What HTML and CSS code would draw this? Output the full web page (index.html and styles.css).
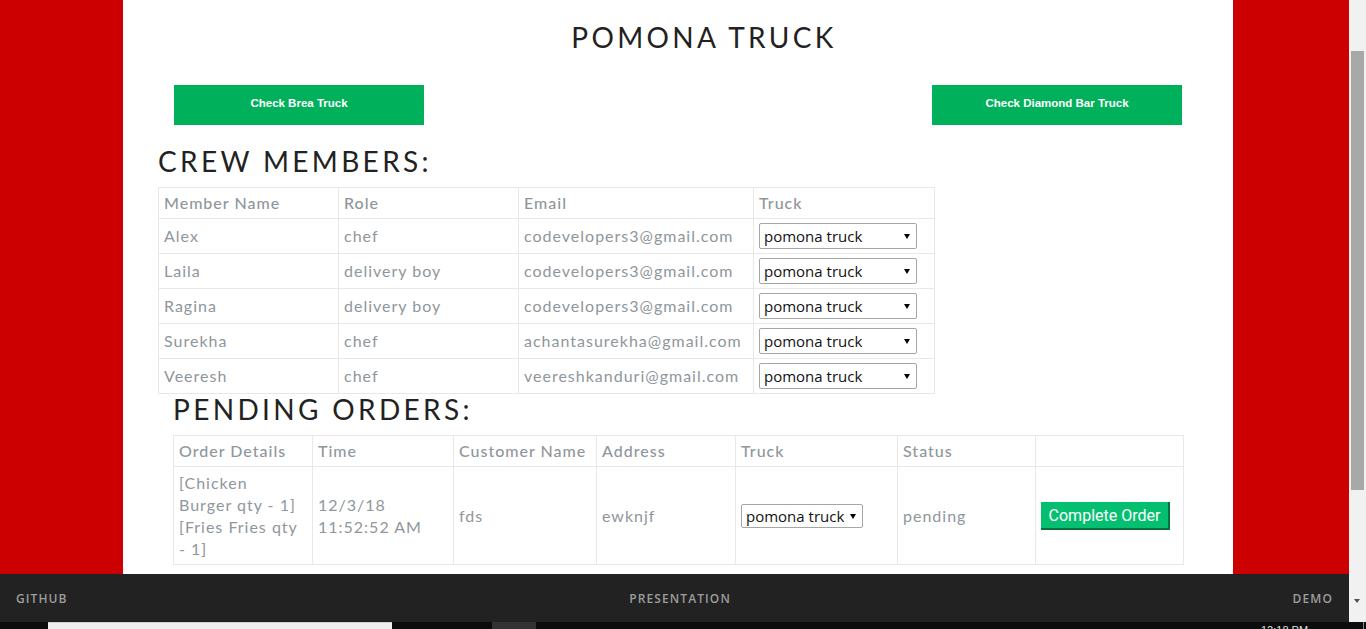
FILE: index.html
```html
<!DOCTYPE html>
<html lang="en">
<head>
<meta charset="utf-8">
<title>Pomona Truck</title>
<link rel="stylesheet" href="styles.css">
</head>
<body>
<div class="screen">
  <div class="viewport">
    <div class="page">
      <main class="container">
        <h1 class="title">POMONA TRUCK</h1>
        <div class="truck-links">
          <button class="truck-btn">Check Brea Truck</button>
          <button class="truck-btn">Check Diamond Bar Truck</button>
        </div>
        <section class="crew">
          <h2 class="section-title">CREW MEMBERS:</h2>
          <table class="data crew-table">
            <colgroup><col class="c180"><col class="c180"><col class="c235"><col class="c181"></colgroup>
            <thead><tr><th>Member Name</th><th>Role</th><th>Email</th><th>Truck</th></tr></thead>
            <tbody>
              <tr><td>Alex</td><td>chef</td><td>codevelopers3@gmail.com</td><td><span class="select-wrap"><span class="select">pomona truck</span></span></td></tr>
              <tr><td>Laila</td><td>delivery boy</td><td>codevelopers3@gmail.com</td><td><span class="select-wrap"><span class="select">pomona truck</span></span></td></tr>
              <tr><td>Ragina</td><td>delivery boy</td><td>codevelopers3@gmail.com</td><td><span class="select-wrap"><span class="select">pomona truck</span></span></td></tr>
              <tr><td>Surekha</td><td>chef</td><td>achantasurekha@gmail.com</td><td><span class="select-wrap"><span class="select">pomona truck</span></span></td></tr>
              <tr><td>Veeresh</td><td>chef</td><td>veereshkanduri@gmail.com</td><td><span class="select-wrap"><span class="select">pomona truck</span></span></td></tr>
            </tbody>
          </table>
        </section>
        <section class="orders">
          <h2 class="section-title">PENDING ORDERS:</h2>
          <table class="data orders-table">
            <colgroup><col class="c139"><col class="c141"><col class="c143"><col class="c139"><col class="c162"><col class="c138"><col class="c148"></colgroup>
            <thead><tr><th>Order Details</th><th>Time</th><th>Customer Name</th><th>Address</th><th>Truck</th><th>Status</th><th></th></tr></thead>
            <tbody>
              <tr>
                <td class="details">[Chicken Burger qty - 1] [Fries Fries qty - 1]</td>
                <td>12/3/18<br>11:52:52 AM</td>
                <td>fds</td>
                <td>ewknjf</td>
                <td><span class="select-wrap small"><span class="select">pomona truck</span></span></td>
                <td>pending</td>
                <td><button class="complete-btn">Complete Order</button></td>
              </tr>
            </tbody>
          </table>
        </section>
      </main>
      <footer class="footer">
        <a class="foot-link">GITHUB</a>
        <a class="foot-link">PRESENTATION</a>
        <a class="foot-link">DEMO</a>
      </footer>
    </div>
    <div class="scrollbar"><div class="thumb"></div><span class="arrow-down"></span></div>
  </div>
  <div class="taskbar">
    <span class="tb-search"></span>
    <span class="tb-app"></span>
    <span class="tb-clock">12:18 PM</span>
    <span class="tb-edge"></span>
  </div>
</div>
</body>
</html>
```
FILE: styles.css
```css
html, body {
  margin: 0;
  padding: 0;
  overflow: hidden;
}
.screen {
  width: 1366px;
  height: 629px;
  display: flex;
  flex-direction: column;
}
.viewport {
  display: flex;
  height: 622px;
}
.page {
  flex: 1;
  background: #cc0000;
  display: flex;
  flex-direction: column;
}
.container {
  margin-left: 123px;
  width: 1110px;
  height: 574px;
  background: #ffffff;
  box-sizing: border-box;
  padding-top: 23px;
  font-family: "Lato", "Open Sans", sans-serif;
}
.title {
  margin: 0;
  padding-left: 52px;
  text-align: center;
  font-weight: 400;
  font-size: 28px;
  line-height: 28px;
  letter-spacing: 3.35px;
  color: #222;
}
.truck-links {
  display: flex;
  justify-content: space-between;
  margin: 34px 51px 0;
}
.truck-btn {
  width: 250px;
  height: 40px;
  border: none;
  background: #00b05a;
  color: #fff;
  font-family: "Liberation Sans", Arial, sans-serif;
  font-weight: 700;
  font-size: 11.5px;
  padding: 0 0 4px;
}
.section-title {
  margin: 0 0 12px;
  font-weight: 400;
  font-size: 28px;
  line-height: 28px;
  letter-spacing: 3.35px;
  color: #222;
}
.crew {
  padding-left: 35px;
  margin-top: 22px;
}
.orders {
  padding-left: 50px;
  margin-top: 1px;
}
.data {
  border-collapse: collapse;
  table-layout: fixed;
  color: #8f969c;
  font-size: 16px;
  letter-spacing: 1px;
}
.crew-table { width: 776px; }
.orders-table { width: 1010px; }
.c180 { width: 180px; }
.c181 { width: 181px; }
.c235 { width: 235px; }
.c139 { width: 139px; }
.c141 { width: 141px; }
.c143 { width: 143px; }
.c162 { width: 162px; }
.c138 { width: 138px; }
.c148 { width: 148px; }
.data th, .data td {
  border: 1px solid #e8e8e8;
  padding: 4px 5px;
  line-height: 22px;
  text-align: left;
  vertical-align: middle;
}
.data th {
  font-weight: 500;
}
.orders-table td {
  padding: 5px 5px 4px;
}
.orders-table td.details {
  padding-right: 10px;
}
.select-wrap {
  position: relative;
  display: block;
  width: 158px;
}
.select-wrap.small { width: 122px; }
.select {
  display: block;
  box-sizing: border-box;
  height: 26px;
  border: 1px solid #a6a6a6;
  border-radius: 2px;
  background: #fff;
  color: #111;
  font-family: "Open Sans", sans-serif;
  font-size: 15px;
  line-height: 24px;
  letter-spacing: 0;
  padding-left: 4px;
}
.select-wrap.small .select { height: 24px; line-height: 22px; }
.select-wrap::after {
  content: "";
  position: absolute;
  right: 7px;
  top: 11px;
  border-left: 3.5px solid transparent;
  border-right: 3.5px solid transparent;
  border-top: 5px solid #000;
}
.select-wrap.small::after { top: 10px; }
.complete-btn {
  width: 129px;
  height: 28px;
  padding: 0;
  border: none;
  border-right: 2px solid #07703f;
  border-bottom: 2px solid #07703f;
  background: #05bf70;
  color: #fff;
  font-family: "Roboto", sans-serif;
  font-size: 16px;
}
.footer {
  height: 48px;
  background: #222;
  display: flex;
  align-items: center;
  justify-content: space-between;
  padding: 0 16px;
}
.foot-link {
  font-family: "Open Sans", sans-serif;
  font-weight: 600;
  font-size: 12px;
  letter-spacing: 1.1px;
  color: #9d9d9d;
}
.scrollbar {
  width: 17px;
  background: #f1f1f1;
  position: relative;
}
.thumb {
  position: absolute;
  left: 2px;
  top: 51px;
  width: 13px;
  height: 439px;
  background: #a8a8a8;
}
.arrow-down {
  position: absolute;
  left: 5px;
  top: 599px;
  border-left: 3.5px solid transparent;
  border-right: 3.5px solid transparent;
  border-top: 4px solid #505050;
}
.taskbar {
  height: 7px;
  background: #0c0c0c;
  display: flex;
  overflow: hidden;
}
.tb-search {
  margin-left: 48px;
  width: 344px;
  background: #f0f0f0;
  border-top: 1px solid #cfcfcf;
}
.tb-app {
  margin-left: 100px;
  width: 44px;
  background: #333;
}
.tb-clock {
  margin-left: 725px;
  color: #ddd;
  font-family: "Liberation Sans", sans-serif;
  font-size: 11px;
  line-height: 16px;
}
.tb-edge {
  margin-left: auto;
  margin-right: 2px;
  width: 1px;
  background: #888;
}
```
